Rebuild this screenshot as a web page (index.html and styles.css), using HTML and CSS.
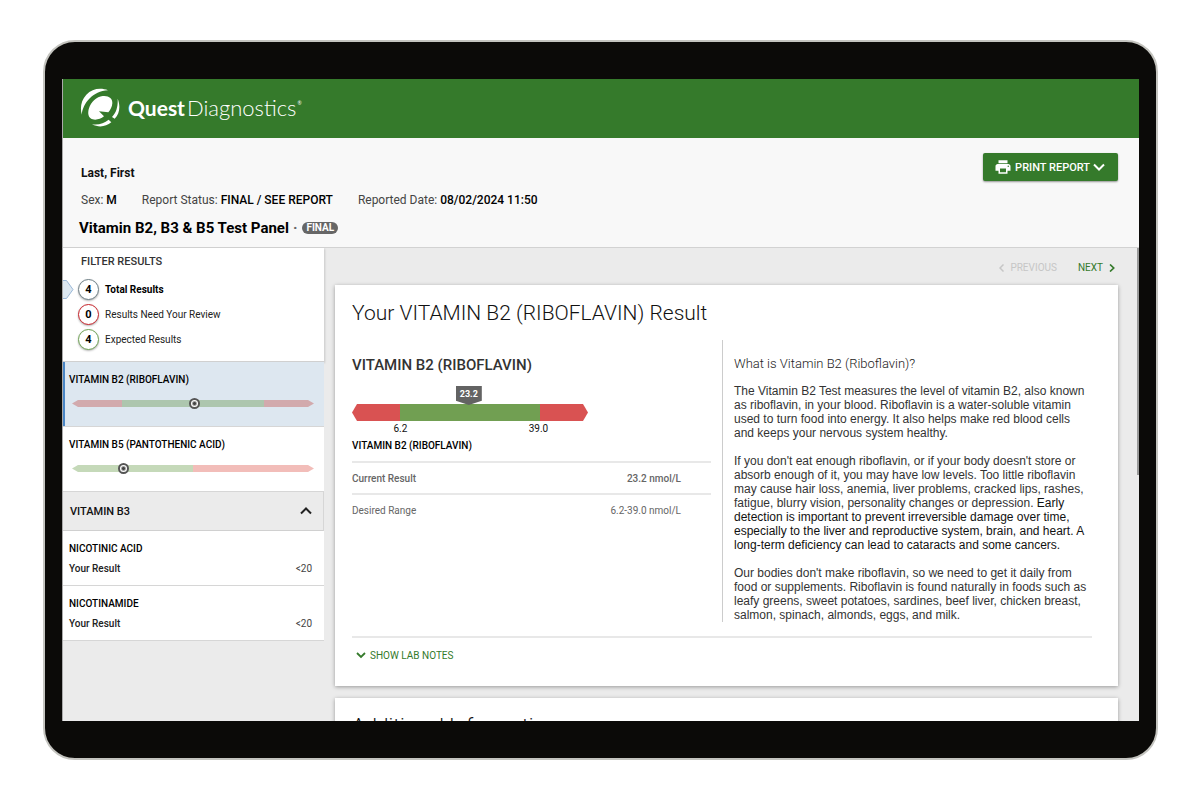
FILE: index.html
```html
<!DOCTYPE html>
<html lang="en">
<head>
<meta charset="utf-8">
<title>Quest Diagnostics – Test Report</title>
<link rel="stylesheet" href="styles.css">
</head>
<body>
<div class="device">
<div class="screen">
  <header class="brand">
    <svg class="brand-mark" viewBox="0 0 120 117" aria-hidden="true">
      <g fill="#fff">
        <path d="M84 7C62 -2 36 2 19 20C3 37 0 59 5 80C9 46 38 9 84 7Z"/>
        <path d="M68 24C86 22 98 31 97 46C96 57 91 66 85 73L57 70L72 85C62 93 49 97 38 94C25 91 22 76 27 61C33 42 50 26 68 24Z"/>
        <path d="M113 32C122 54 119 77 104 92L96 87C110 73 114 54 113 32Z"/>
        <path d="M36 109C56 112 72 106 86 95L94 103C77 117 56 119 36 109Z"/>
      </g>
    </svg>
    <span class="brand-name"><b>Quest</b><span class="brand-light">Diagnostics</span><sup>®</sup></span>
  </header>

  <section class="patient">
    <div class="patient-info">
      <div class="patient-name">Last, First</div>
      <div class="patient-facts">
        <span>Sex: <b>M</b></span>
        <span>Report Status: <b>FINAL / SEE REPORT</b></span>
        <span>Reported Date: <b>08/02/2024 11:50</b></span>
      </div>
      <h1 class="panel-title">Vitamin B2, B3 &amp; B5 Test Panel <span class="dot">·</span> <span class="badge">FINAL</span></h1>
    </div>
    <button class="print" type="button">
      <svg width="18" height="18" viewBox="0 0 24 24" aria-hidden="true"><path fill="#fff" d="M19 8H5c-1.660 0-3 1.340-3 3v6h4v4h12v-4h4v-6c0-1.660-1.340-3-3-3zm-3 11H8v-5h8v5zm3-7c-.55 0-1-.45-1-1s.45-1 1-1 1 .45 1 1-.45 1-1 1zm-1-9H6v4h12V3z"/></svg>
      <span>PRINT REPORT</span>
      <svg width="12" height="8" viewBox="0 0 12 8" aria-hidden="true"><path fill="none" stroke="#fff" stroke-width="2" d="M1 1.500l5 5 5-5"/></svg>
    </button>
  </section>

  <div class="content">
    <aside class="sidebar">
      <section class="filter">
        <h2>FILTER RESULTS</h2>
        <ul>
          <li><svg class="pointer" width="12" height="21" viewBox="0 0 12 21" aria-hidden="true"><path fill="#dde8f1" stroke="#9bb8d8" d="M-1 1.500H3.500L10 10.500L3.500 19.500H-1"/></svg><button type="button" class="filter-item current"><span class="count">4</span>Total Results</button></li>
          <li><button type="button" class="filter-item"><span class="count review">0</span>Results Need Your Review</button></li>
          <li><button type="button" class="filter-item"><span class="count expected">4</span>Expected Results</button></li>
        </ul>
      </section>
      <a class="test selected" href="#b2">
        <span class="test-name">VITAMIN B2 (RIBOFLAVIN)</span>
        <span class="mini"><span class="mini-bar"><i class="low" style="width:20.5%"></i><i class="ok" style="width:59%"></i><i class="low" style="width:20.5%"></i></span><span class="mini-dot" style="left:51%"></span></span>
      </a>
      <a class="test" href="#b5">
        <span class="test-name">VITAMIN B5 (PANTOTHENIC ACID)</span>
        <span class="mini"><span class="mini-bar"><i class="ok" style="width:50%"></i><i class="low" style="width:50%"></i></span><span class="mini-dot" style="left:21.500%"></span></span>
      </a>
      <button class="group" type="button"><span>VITAMIN B3</span><svg width="12" height="8" viewBox="0 0 12 8" aria-hidden="true"><path fill="none" stroke="#222" stroke-width="2" d="M1 6.500l5-5 5 5"/></svg></button>
      <a class="result" href="#nicotinic-acid"><b>NICOTINIC ACID</b><span class="result-row"><span>Your Result</span><span class="value">&lt;20</span></span></a>
      <a class="result" href="#nicotinamide"><b>NICOTINAMIDE</b><span class="result-row"><span>Your Result</span><span class="value">&lt;20</span></span></a>
    </aside>

    <main class="main">
      <div class="scrollbar"></div>
      <nav class="pager">
        <button type="button" disabled><svg width="5" height="8" viewBox="0 0 5 8" aria-hidden="true"><path fill="none" stroke="currentColor" stroke-width="1.500" d="M4.500 .5L1 4l3.500 3.500"/></svg>PREVIOUS</button>
        <button type="button">NEXT<svg width="6" height="8" viewBox="0 0 6 8" aria-hidden="true"><path fill="none" stroke="currentColor" stroke-width="1.700" d="M1 .5L4.700 4L1 7.500"/></svg></button>
      </nav>
      <article class="card" id="b2">
        <h2>Your VITAMIN B2 (RIBOFLAVIN) Result</h2>
        <div class="columns">
          <div class="measure">
            <h3>VITAMIN B2 (RIBOFLAVIN)</h3>
            <div class="range">
              <div class="range-bar"><i class="bad" style="width:20.500%"></i><i class="good" style="width:59%"></i><i class="bad" style="width:20.500%"></i></div>
              <span class="tag" style="left:49.500%">23.2</span>
              <div class="ticks"><span style="left:20.500%">6.2</span><span style="left:79%">39.0</span></div>
            </div>
            <table>
              <caption>VITAMIN B2 (RIBOFLAVIN)</caption>
              <tbody>
                <tr class="now"><th scope="row">Current Result</th><td>23.2 nmol/L</td></tr>
                <tr><th scope="row">Desired Range</th><td>6.2-39.0 nmol/L</td></tr>
              </tbody>
            </table>
          </div>
          <div class="about">
            <h3>What is Vitamin B2 (Riboflavin)?</h3>
            <p>The Vitamin B2 Test measures the level of vitamin B2, also known as riboflavin, in your blood. Riboflavin is a water-soluble vitamin used to turn food into energy. It also helps make red blood cells and keeps your nervous system healthy.</p>
            <p>If you don't eat enough riboflavin, or if your body doesn't store or absorb enough of it, you may have low levels. Too little riboflavin may cause hair loss, anemia, liver problems, cracked lips, rashes, fatigue, blurry vision, personality changes or depression. <span class="dark">Early detection is important to prevent irreversible damage over time, especially to the liver and reproductive system, brain, and heart. A long-term deficiency can lead to cataracts and some cancers.</span></p>
            <p>Our bodies don't make riboflavin, so we need to get it daily from food or supplements. Riboflavin is found naturally in foods such as leafy greens, sweet potatoes, sardines, beef liver, chicken breast, salmon, spinach, almonds, eggs, and milk.</p>
          </div>
        </div>
        <div class="notes"><button type="button"><svg width="10" height="7" viewBox="0 0 10 7" aria-hidden="true"><path fill="none" stroke="currentColor" stroke-width="1.800" d="M1 1l4 4 4-4"/></svg>SHOW LAB NOTES</button></div>
      </article>
      <article class="card"><h2>Additional Information</h2></article>
    </main>
  </div>
</div>
</div>
</body>
</html>
```

FILE: styles.css
```css
* { box-sizing: border-box; }
body { margin: 0; height: 100vh; padding: 40px 42px 40px 43px; background: #fff; font-family: Roboto, "Liberation Sans", sans-serif; font-size: 12px; color: #111; }
h1, h2, h3, p, ul { margin: 0; padding: 0; }
button { font: inherit; color: inherit; background: none; border: 0; padding: 0; cursor: pointer; }
a { color: inherit; text-decoration: none; }
svg { flex: none; }

.device { height: 100%; padding: 37px 17px; background: #0b0a08; border: 2px solid #c4c4bf; border-radius: 32px; }
.screen { height: 100%; display: flex; flex-direction: column; overflow: hidden; background: #ebebeb; border-left: 1px solid #aaa; }

.brand { height: 59px; flex: none; display: flex; align-items: center; gap: 8px; padding: 0 17px 3px; background: #357a2b; color: #fff; }
.brand-mark { width: 40px; height: 39px; }
.brand-name { padding-top: 2px; font-family: Lato, sans-serif; font-size: 22px; line-height: 24px; display: flex; gap: 2px; }
.brand-name b { font-weight: 700; font-size: 21px; }
.brand-light { font-weight: 300; }
.brand-name sup { margin-left: -1px; font-size: 5px; line-height: 14px; }

.patient { flex: none; display: flex; justify-content: space-between; align-items: flex-start; padding: 0 21px 7px 18px; background: #f8f8f8; border-bottom: 1px solid #d2d2d2; }
.patient-info { padding-top: 25px; }
.patient-name { font-weight: 700; line-height: 20px; }
.patient-facts { display: flex; gap: 25px; margin-top: 7px; line-height: 20px; color: #444; }
.patient-facts b { font-weight: 500; color: #000; }
.panel-title { margin: 6px 0 0 -2px; font-size: 15px; line-height: 24px; font-weight: 700; color: #000; display: flex; align-items: center; gap: 4px; }
.dot { color: #666; }
.badge { margin-left: 1px; padding: 0 4px; border-radius: 6px; background: #666; color: #fff; font-size: 10px; line-height: 12px; font-weight: 700; }
.print { margin-top: 15px; height: 28px; padding: 0 13px 0 11px; display: flex; align-items: center; gap: 3px; border-radius: 2px; background: #357a2b; color: #fff; font-size: 11px; font-weight: 500; box-shadow: 0 1px 2px rgba(0,0,0,.4); }

.content { flex: 1; min-height: 0; display: flex; }
.sidebar { flex: none; width: 261px; }
.filter { padding: 6px 15px 11px; background: #fff; border-bottom: 1px solid #d0d0d0; box-shadow: 1px 1px 2px rgba(0,0,0,.15); }
.filter h2 { margin: 0 0 9px 3px; font-size: 11px; line-height: 16px; font-weight: 500; color: #333; }
.filter ul { list-style: none; display: grid; gap: 4px; }
.filter li { position: relative; }
.pointer { position: absolute; left: -15px; top: 0; }
.filter-item { display: flex; align-items: center; gap: 6px; font-size: 10px; color: #222; }
.filter-item.current { font-weight: 700; color: #000; }
.count { width: 21px; height: 21px; border: 1px solid #6f8087; border-radius: 50%; line-height: 19px; text-align: center; font-size: 11px; font-weight: 700; color: #000; background: #fff; box-shadow: 0 1px 2px rgba(0,0,0,.3); }
.count.review { border-color: #c9252c; }
.count.expected { border-color: #6fa355; }

.test { display: block; padding: 10px 10px 17px 6px; background: #fff; border-bottom: 1px solid #d6d6d6; }
.test.selected { background: #dde7f0; box-shadow: inset 2px 0 #4a86c5; }
.test-name { display: block; margin-bottom: 9px; font-size: 10px; line-height: 16px; font-weight: 500; color: #000; }
.mini { display: block; position: relative; height: 12px; margin-left: 3px; padding: 2px 0; }
.mini-bar { display: flex; height: 7px; margin-top: 1px; clip-path: polygon(0 50%, 6px 0, calc(100% - 6px) 0, 100% 50%, calc(100% - 6px) 100%, 6px 100%); }
.mini-bar .low { background: #f2bdb9; }
.mini-bar .ok { background: #c5d9b9; }
.selected .low { background: #d2aaad; }
.selected .ok { background: #adc6ae; }
.mini-dot { position: absolute; top: 1px; width: 11px; height: 11px; margin-left: -6px; border-radius: 50%; border: 2px solid #555; background: radial-gradient(circle, #444 1px, #fff 3px); }
.group { width: 100%; height: 39px; padding: 0 11px 0 7px; display: flex; align-items: center; justify-content: space-between; background: #ebebeb; border-bottom: 1px solid #d0d0d0; border-right: 1px solid #d6d6d6; font-size: 11px; font-weight: 500; }
.result { display: block; padding: 10px 12px 8px 6px; background: #fff; border-bottom: 1px solid #d6d6d6; font-size: 10px; line-height: 16px; }
.result b { font-weight: 500; color: #000; }
.result-row { display: flex; justify-content: space-between; margin-top: 4px; font-weight: 500; color: #222; }
.value { font-weight: 400; color: #444; }

.main { position: relative; flex: 1; min-width: 0; padding: 0 21px 0 11px; overflow: hidden; }
.scrollbar { position: absolute; right: 0; top: 0; width: 2px; height: 48%; background: #999; }
.pager { height: 37px; display: flex; align-items: center; justify-content: flex-end; gap: 21px; padding: 2px 3px 0 0; font-size: 10px; color: #357a2b; }
.pager button { display: flex; align-items: center; gap: 6px; }
.pager button:disabled { color: #c6c6c6; }
.card { margin-bottom: 12px; padding: 16px 26px 22px 17px; background: #fff; box-shadow: 0 1px 4px rgba(0,0,0,.35); }
.card h2 { font-size: 21px; line-height: 24px; font-weight: 300; color: #111; }
.columns { display: grid; grid-template-columns: 1fr 1fr; margin: 15px 0 14px; }
.measure { padding: 15px 11px 0 0; }
.measure h3 { font-size: 15px; line-height: 20px; font-weight: 500; color: #333; }
.range { position: relative; width: 236px; padding-top: 29px; }
.range-bar { display: flex; height: 17px; clip-path: polygon(0 50%, 5px 0, calc(100% - 5px) 0, 100% 50%, calc(100% - 5px) 100%, 5px 100%); }
.bad { background: #d95252; }
.good { background: #719f52; }
.tag { position: absolute; top: 11px; width: 26px; height: 19px; margin-left: -13px; background: #636363; color: #fff; font-size: 9px; line-height: 17px; font-weight: 700; text-align: center; clip-path: polygon(0 0, 100% 0, 100% 78%, 50% 100%, 0 78%); }
.ticks { position: relative; height: 16px; font-size: 10px; line-height: 16px; }
.ticks span { position: absolute; width: 30px; margin-left: -15px; text-align: center; }
table { width: 100%; border-collapse: collapse; font-size: 10px; color: #666; }
caption { padding: 1px 0 7px; text-align: left; line-height: 16px; font-weight: 500; color: #000; }
tr { border-top: 2px solid #e8e8e8; }
th, td { height: 32px; padding: 0; text-align: left; font-weight: 400; }
td { padding-right: 30px; text-align: right; }
.now th, .now td { font-weight: 500; }
.about { padding: 14px 0 0 11px; border-left: 1px solid #ccc; }
.about h3 { margin-bottom: 10px; font-size: 13px; line-height: 20px; font-weight: 300; color: #222; }
.about p { margin-bottom: 14px; font-family: "Liberation Sans", Arial, sans-serif; font-size: 12px; line-height: 14px; color: #333; }
.about p:last-child { margin-bottom: 0; }
.dark { color: #111; }
.notes { padding: 8px 0 0 4px; border-top: 2px solid #e8e8e8; }
.notes button { display: flex; align-items: center; gap: 4px; height: 18px; font-size: 10px; color: #357a2b; }
```
